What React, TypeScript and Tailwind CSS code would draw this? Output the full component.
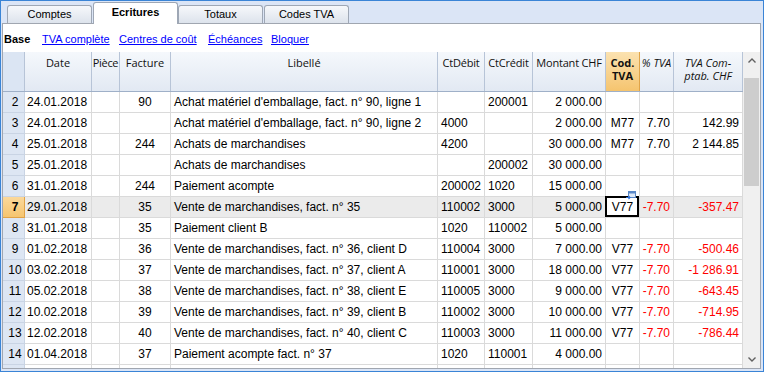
import React from "react";

type Row = {
  n: number;
  date: string;
  fact: string;
  lib: string;
  deb: string;
  cred: string;
  amt: string;
  code: string;
  pct: string;
  tva: string;
};

const rows: Row[] = [
  { n: 2, date: "24.01.2018", fact: "90", lib: "Achat matériel d'emballage, fact. n° 90, ligne 1", deb: "", cred: "200001", amt: "2 000.00", code: "", pct: "", tva: "" },
  { n: 3, date: "24.01.2018", fact: "", lib: "Achat matériel d'emballage, fact. n° 90, ligne 2", deb: "4000", cred: "", amt: "2 000.00", code: "M77", pct: "7.70", tva: "142.99" },
  { n: 4, date: "25.01.2018", fact: "244", lib: "Achats de marchandises", deb: "4200", cred: "", amt: "30 000.00", code: "M77", pct: "7.70", tva: "2 144.85" },
  { n: 5, date: "25.01.2018", fact: "", lib: "Achats de marchandises", deb: "", cred: "200002", amt: "30 000.00", code: "", pct: "", tva: "" },
  { n: 6, date: "31.01.2018", fact: "244", lib: "Paiement acompte", deb: "200002", cred: "1020", amt: "15 000.00", code: "", pct: "", tva: "" },
  { n: 7, date: "29.01.2018", fact: "35", lib: "Vente de marchandises, fact. n° 35", deb: "110002", cred: "3000", amt: "5 000.00", code: "V77", pct: "-7.70", tva: "-357.47" },
  { n: 8, date: "31.01.2018", fact: "35", lib: "Paiement client B", deb: "1020", cred: "110002", amt: "5 000.00", code: "", pct: "", tva: "" },
  { n: 9, date: "01.02.2018", fact: "36", lib: "Vente de marchandises, fact. n° 36, client D", deb: "110004", cred: "3000", amt: "7 000.00", code: "V77", pct: "-7.70", tva: "-500.46" },
  { n: 10, date: "03.02.2018", fact: "37", lib: "Vente de marchandises, fact. n° 37, client A", deb: "110001", cred: "3000", amt: "18 000.00", code: "V77", pct: "-7.70", tva: "-1 286.91" },
  { n: 11, date: "05.02.2018", fact: "38", lib: "Vente de marchandises, fact. n° 38, client E", deb: "110005", cred: "3000", amt: "9 000.00", code: "V77", pct: "-7.70", tva: "-643.45" },
  { n: 12, date: "10.02.2018", fact: "39", lib: "Vente de marchandises, fact. n° 39, client B", deb: "110002", cred: "3000", amt: "10 000.00", code: "V77", pct: "-7.70", tva: "-714.95" },
  { n: 13, date: "12.02.2018", fact: "40", lib: "Vente de marchandises, fact. n° 40, client C", deb: "110003", cred: "3000", amt: "11 000.00", code: "V77", pct: "-7.70", tva: "-786.44" },
  { n: 14, date: "01.04.2018", fact: "37", lib: "Paiement acompte fact. n° 37", deb: "1020", cred: "110001", amt: "4 000.00", code: "", pct: "", tva: "" },
];

const cellBase =
  "h-full shrink-0 border-r border-b border-[#dadada] overflow-hidden whitespace-nowrap leading-[20px]";
const headBase =
  "h-full shrink-0 border-r border-[#b7c4d7] flex flex-col items-center pt-[4px] leading-[13px] text-center";

function Chevron({ down }: { down?: boolean }) {
  return (
    <svg width="8" height="5" viewBox="0 0 8 5">
      <polyline
        points={down ? "0.5,0.5 4,4 7.5,0.5" : "0.5,4.5 4,1 7.5,4.5"}
        fill="none"
        stroke="#606060"
        strokeWidth="1.4"
      />
    </svg>
  );
}

function Tab({ label, active }: { label: string; active?: boolean }) {
  if (active) {
    return (
      <div className="relative z-10 -mb-[1px] ml-[1px] flex h-[22px] w-[85px] items-center justify-center rounded-t-[3px] border border-b-0 border-[#9ea7b5] bg-white pb-[2px] font-bold text-black">
        {label}
      </div>
    );
  }
  return (
    <div className="flex h-[18px] w-[85px] items-center justify-center rounded-t-[3px] border border-b-0 border-[#9ea7b5] bg-linear-to-b from-[#f6f8fb] to-[#dde3ec] text-black">
      {label}
    </div>
  );
}

function DataRow({ r }: { r: Row }) {
  const sel = r.n === 7;
  const red = r.pct.startsWith("-") ? "text-[#ff0000]" : "";
  return (
    <div className={`flex h-[21px] shrink-0 ${sel ? "bg-[#ebebeb]" : "bg-white"}`}>
      <div
        className={`h-full w-[22px] shrink-0 border-r border-b pl-[3px] text-center leading-[20px] ${
          sel
            ? "border-[#e1a347] bg-linear-to-b from-[#fbd89a] to-[#f6c56f] font-bold"
            : "border-[#c9d4e4] bg-[#dde6f3]"
        }`}
      >
        {r.n}
      </div>
      <div className={`${cellBase} w-[67px] pl-[2px]`}>{r.date}</div>
      <div className={`${cellBase} w-[28px]`}></div>
      <div className={`${cellBase} w-[51px] text-center`}>{r.fact}</div>
      <div className={`${cellBase} w-[267px] pl-[3px]`}>{r.lib}</div>
      <div className={`${cellBase} w-[47px] pl-[3px]`}>{r.deb}</div>
      <div className={`${cellBase} w-[48px] pl-[3px]`}>{r.cred}</div>
      <div className={`${cellBase} w-[73px] pr-[3px] text-right`}>{r.amt}</div>
      <div
        className={`${cellBase} relative w-[34px] text-center ${sel ? "overflow-visible bg-white" : ""}`}
      >
        {r.code}
        {sel && (
          <>
            <div className="absolute -top-[1px] -left-[1px] h-[21px] w-[34px] border-2 border-black" />
            <svg
              className="absolute -top-[6px] left-[20px]"
              width="10"
              height="9"
              viewBox="0 0 10 9"
            >
              <rect x="2.5" y="0.5" width="7" height="6" fill="#dce8f8" stroke="#5a88c8" />
              <rect x="3" y="1" width="6" height="1.5" fill="#5a88c8" />
              <path d="M0 6.5 H4 M2.5 5 L4 6.5 L2.5 8" stroke="#2f6fd0" strokeWidth="1.2" fill="none" />
            </svg>
          </>
        )}
      </div>
      <div className={`${cellBase} w-[34px] pr-[3px] text-right ${red}`}>{r.pct}</div>
      <div className={`${cellBase} w-[69px] pr-[3px] text-right ${red}`}>{r.tva}</div>
    </div>
  );
}

export default function App() {
  return (
    <div className="flex h-[372px] w-[764px] flex-col overflow-hidden border border-[#3a84d6] bg-[#dbe5f6] font-['Liberation_Sans',Arial,sans-serif] text-[12px] text-black">
      {/* onglets */}
      <div className="flex h-[22px] shrink-0 items-end pl-[6px] text-[11px] font-['Liberation_Sans',Tahoma,sans-serif]">
        <Tab label="Comptes" />
        <Tab label="Ecritures" active />
        <Tab label="Totaux" />
        <div className="ml-[1px]">
          <Tab label="Codes TVA" />
        </div>
      </div>

      {/* panneau */}
      <div className="mb-[2px] ml-[1px] mr-[2px] flex min-h-0 flex-1 flex-col border border-[#a0a6b0] bg-white">
        {/* barre de vues */}
        <div className="flex h-[28px] shrink-0 items-center pl-[1px] pt-[2px] text-[11px] font-['Liberation_Sans',Tahoma,sans-serif]">
          <span className="w-[38px] font-bold">Base</span>
          <span className="w-[77px] text-[#0000ff] underline">TVA complète</span>
          <span className="w-[89px] text-[#0000ff] underline">Centres de coût</span>
          <span className="w-[63px] text-[#0000ff] underline">Échéances</span>
          <span className="text-[#0000ff] underline">Bloquer</span>
        </div>

        {/* tableau */}
        <div className="flex min-h-0 flex-1">
          <div className="flex w-[740px] shrink-0 flex-col overflow-hidden">
            <div className="flex h-[40px] shrink-0 border-b border-[#9fb0c8] bg-linear-to-b from-[#f5f8fc] to-[#e2e9f3] font-['Open_Sans',sans-serif] text-[11px] text-[#111]">
              <div className="h-full w-[22px] shrink-0 border-r border-[#b7c4d7] bg-[#dbe5f3]" />
              <div className={`${headBase} w-[67px]`}>Date</div>
              <div className={`${headBase} w-[28px] tracking-[-0.3px]`}>Pièce</div>
              <div className={`${headBase} w-[51px]`}>Facture</div>
              <div className={`${headBase} w-[267px]`}>Libellé</div>
              <div className={`${headBase} w-[47px] tracking-[-0.2px]`}>CtDébit</div>
              <div className={`${headBase} w-[48px] tracking-[-0.2px]`}>CtCrédit</div>
              <div className={`${headBase} w-[73px] tracking-[-0.2px]`}>Montant CHF</div>
              <div className="flex h-full w-[34px] shrink-0 flex-col items-center border-r border-[#e0a448] bg-linear-to-b from-[#fbe2b0] to-[#f5c46e] pt-[4px] text-center font-bold leading-[13px]">
                <span>Cod.</span>
                <span>TVA</span>
              </div>
              <div className={`${headBase} w-[34px] italic`}>% TVA</div>
              <div className={`${headBase} w-[69px] italic`}>
                <span>TVA Com-</span>
                <span>ptab. CHF</span>
              </div>
            </div>
            {rows.map((r) => (
              <DataRow key={r.n} r={r} />
            ))}
            <div className="flex h-[21px] shrink-0">
              <div className="h-full w-[22px] shrink-0 border-r border-[#c9d4e4] bg-[#dde6f3]" />
              <div className={`${cellBase} w-[67px]`} />
              <div className={`${cellBase} w-[28px]`} />
              <div className={`${cellBase} w-[51px]`} />
              <div className={`${cellBase} w-[267px]`} />
              <div className={`${cellBase} w-[47px]`} />
              <div className={`${cellBase} w-[48px]`} />
              <div className={`${cellBase} w-[73px]`} />
              <div className={`${cellBase} w-[34px]`} />
              <div className={`${cellBase} w-[34px]`} />
              <div className={`${cellBase} w-[69px]`} />
            </div>
          </div>

          {/* barre de défilement */}
          <div className="flex w-[17px] shrink-0 flex-col bg-[#f0f0f0]">
            <div className="flex h-[17px] shrink-0 items-center justify-center">
              <Chevron />
            </div>
            <div className="h-[9px] shrink-0" />
            <div className="ml-[1px] h-[108px] w-[15px] shrink-0 bg-[#cdcdcd]" />
            <div className="flex-1" />
            <div className="flex h-[17px] shrink-0 items-center justify-center">
              <Chevron down />
            </div>
          </div>
        </div>
      </div>
    </div>
  );
}
